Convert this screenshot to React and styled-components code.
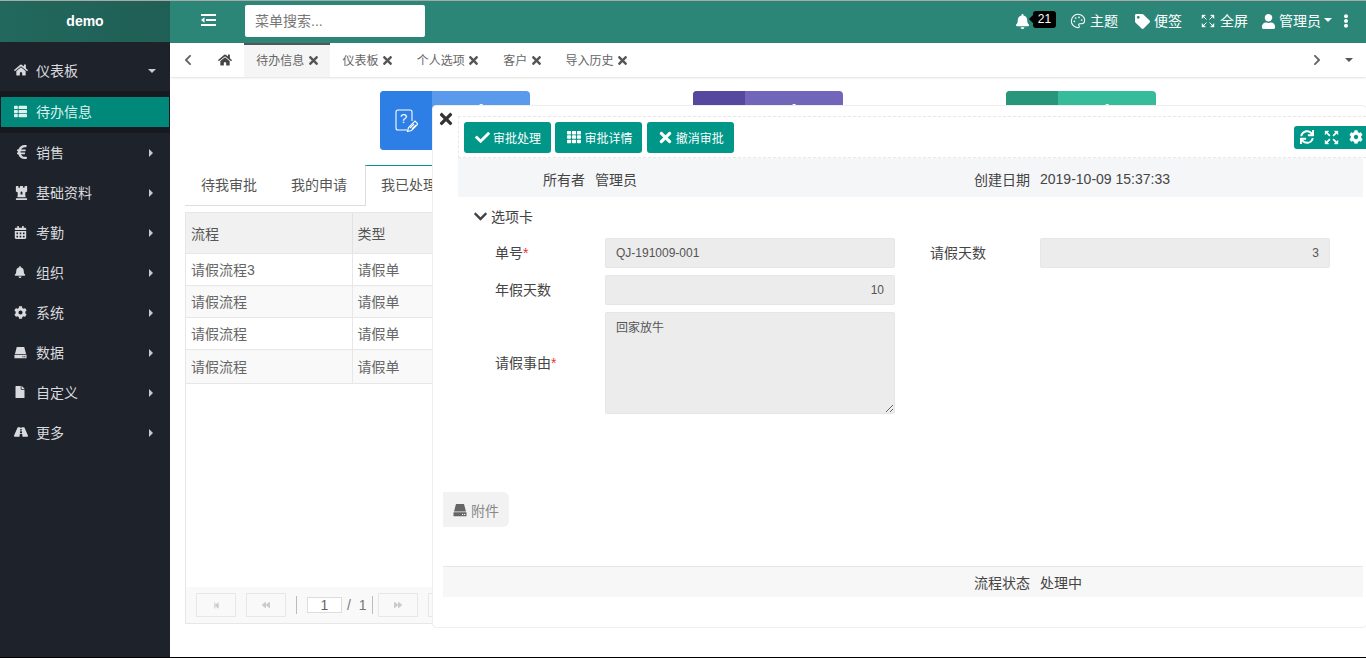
import React from 'react'
import styled, { createGlobalStyle } from 'styled-components'
import {
  FaHome, FaThList, FaEuroSign, FaChessRook, FaCalendarAlt, FaBell, FaCog, FaFile, FaRoad,
  FaTimes, FaCheck, FaTh, FaChevronDown, FaChevronLeft, FaChevronRight, FaSync,
  FaTag, FaUser, FaEllipsisV, FaStepBackward, FaBackward, FaForward,
} from 'react-icons/fa'
import { Palette } from 'lucide-react'

const GlobalStyle = createGlobalStyle`
  html, body { margin: 0; padding: 0; height: 100%; background: #fff; }
  * { box-sizing: border-box; }
  body {
    font-family: "Liberation Sans", "Noto Sans CJK SC", sans-serif;
    font-size: 14px;
    color: #555;
  }
`

const HddIcon = ({ size = 14 }) => (
  <svg width={size} height={size} viewBox="0 0 14 14" fill="currentColor">
    <path d="M3 1h8l2 7.500H1z" />
    <path fillRule="evenodd" d="M0.500 9.300h13v3.400a.6.6 0 0 1-.6.6H1.100a.6.6 0 0 1-.6-.6zM9 11v1h1.200v-1zM11 11v1h1.200v-1z" />
  </svg>
)

const FullIcon = ({ size = 14, weight = 1.4 }) => (
  <svg width={size} height={size} viewBox="0 0 14 14" fill="currentColor" stroke="currentColor" strokeWidth={weight}>
    <path d="M1 1h3.500L1 4.500z" strokeWidth="0.4" />
    <path d="M13 1H9.500L13 4.500z" strokeWidth="0.4" />
    <path d="M1 13h3.500L1 9.500z" strokeWidth="0.4" />
    <path d="M13 13H9.500L13 9.500z" strokeWidth="0.4" />
    <path d="M2.500 2.500l3 3M11.500 2.500l-3 3M2.500 11.500l3-3M11.500 11.500l-3-3" fill="none" />
  </svg>
)

const ToggleIcon = () => (
  <svg width="15" height="12" viewBox="0 0 15 12" fill="#fff">
    <rect x="0" y="0" width="15" height="2" />
    <rect x="5" y="5" width="10" height="2" />
    <rect x="0" y="10" width="15" height="2" />
    <path d="M0 6l3.500-2.800v5.600z" />
  </svg>
)

const QuestionIcon = () => (
  <svg width="24" height="24" viewBox="0 0 24 24" fill="none" stroke="#fff" strokeWidth="1.1">
    <path d="M13 21H4a2 2 0 0 1-2-2V3a2 2 0 0 1 2-2h12a2 2 0 0 1 2 2v9" />
    <text x="6" y="14" fontSize="13" fill="#fff" stroke="none" fontFamily="Liberation Sans">?</text>
    <path d="M13.500 22.500l1-4 6.500-6.500 3 3-6.500 6.500z" />
    <path d="M16 19l4-4M18 20l4-4" />
  </svg>
)

const menuItems = [
  { label: '销售', icon: <FaEuroSign size={16} /> },
  { label: '基础资料', icon: <FaChessRook size={15} /> },
  { label: '考勤', icon: <FaCalendarAlt size={13} /> },
  { label: '组织', icon: <FaBell size={12} /> },
  { label: '系统', icon: <FaCog size={13} /> },
  { label: '数据', icon: <HddIcon size={13} /> },
  { label: '自定义', icon: <FaFile size={12} /> },
  { label: '更多', icon: <FaRoad size={14} /> },
]

const pageTabs = [
  { label: '待办信息', active: true },
  { label: '仪表板' },
  { label: '个人选项' },
  { label: '客户' },
  { label: '导入历史' },
]

const rows = ['请假流程3', '请假流程', '请假流程', '请假流程']

const cards = [
  { dark: '#2d7fe6', light: '#5a9aec', icon: <QuestionIcon /> },
  { dark: '#57489f', light: '#7266ba' },
  { dark: '#27967a', light: '#37bc9b' },
]

export default function App() {
  return (
    <Page>
      <GlobalStyle />
      <Sidebar>
        <Brand>demo</Brand>
        <Menu>
          <MenuItem>
            <MenuIcon><FaHome size={14} /></MenuIcon>
            仪表板
            <CaretDown />
          </MenuItem>
          <ActiveBand>
            <ActiveItem>
              <MenuIcon><FaThList size={13} /></MenuIcon>
              待办信息
            </ActiveItem>
          </ActiveBand>
          {menuItems.map(item => (
            <MenuItem key={item.label}>
              <MenuIcon>{item.icon}</MenuIcon>
              {item.label}
              <CaretRight />
            </MenuItem>
          ))}
        </Menu>
      </Sidebar>

      <Main>
        <Topbar>
          <Toggle><ToggleIcon /></Toggle>
          <Search placeholder="菜单搜索..." />
          <TopActions>
            <BellWrap>
              <FaBell size={15} />
              <Badge>21</Badge>
            </BellWrap>
            <TopAction $width={65}><Palette size={16} strokeWidth={1.6} />主题</TopAction>
            <TopAction $width={66}><FaTag size={15} />便签</TopAction>
            <TopAction $width={60} $gap={5}><FullIcon size={14} weight={1} />全屏</TopAction>
            <UserBox><FaUser size={15} />管理员<UserCaret /></UserBox>
            <Dots><FaEllipsisV size={14} /></Dots>
          </TopActions>
        </Topbar>

        <TabBar>
          <TabArrow $width={36}><FaChevronLeft size={12} /></TabArrow>
          <HomeTab><FaHome size={14} /></HomeTab>
          {pageTabs.map(tab => (
            <PageTab key={tab.label} $active={tab.active}>
              {tab.label}
              <TabClose><FaTimes size={13} /></TabClose>
            </PageTab>
          ))}
          <TabRight>
            <TabArrow $width={32}><FaChevronRight size={12} /></TabArrow>
            <TabCaretBox><TabCaret /></TabCaretBox>
          </TabRight>
        </TabBar>

        <Content>
          <Cards>
            {cards.map((card, i) => (
              <Card key={i} $color={card.light}>
                <CardIcon $color={card.dark}>{card.icon}</CardIcon>
                <CardNumber>1</CardNumber>
              </Card>
            ))}
          </Cards>

          <Tabs>
            <TabItem>待我审批</TabItem>
            <TabItem>我的申请</TabItem>
            <TabItem $active>我已处理</TabItem>
          </Tabs>

          <TableBox>
            <Table>
              <thead>
                <tr>
                  <HeadCell $w={166}>流程</HeadCell>
                  <HeadCell>类型</HeadCell>
                </tr>
              </thead>
              <tbody>
                {rows.map((row, i) => (
                  <Row key={i} $odd={i % 2 === 1} $last={i === 3}>
                    <Cell>{row}</Cell>
                    <Cell>请假单</Cell>
                  </Row>
                ))}
              </tbody>
            </Table>
            <Pager>
              <PagerBtn><FaStepBackward size={7} /></PagerBtn>
              <PagerBtn><FaBackward size={8} /></PagerBtn>
              <PagerSep />
              <PagerInput defaultValue="1" />
              <PagerText>/ 1</PagerText>
              <PagerSep $tight />
              <PagerBtn><FaForward size={8} /></PagerBtn>
              <PagerBtn />
            </Pager>
          </TableBox>

          <Modal>
            <CloseBtn><FaTimes size={18} /></CloseBtn>
            <Toolbar>
              <ActionBtn><ActionIcon><FaCheck size={15} /></ActionIcon>审批处理</ActionBtn>
              <ActionBtn><ActionIcon><FaTh size={14} /></ActionIcon>审批详情</ActionBtn>
              <ActionBtn><ActionIcon><FaTimes size={17} /></ActionIcon>撤消审批</ActionBtn>
              <ToolGroup>
                <FaSync size={14} />
                <FullIcon size={15} weight={1.6} />
                <FaCog size={14} />
              </ToolGroup>
            </Toolbar>
            <InfoBand>
              <InfoLabel>所有者</InfoLabel>
              <span>管理员</span>
              <InfoLabel>创建日期</InfoLabel>
              <span>2019-10-09 15:37:33</span>
            </InfoBand>
            <SectionTitle><FaChevronDown size={15} />选项卡</SectionTitle>
            <Form>
              <FieldLabel>单号<Star>*</Star></FieldLabel>
              <Field readOnly defaultValue="QJ-191009-001" />
              <FieldLabel $second>请假天数</FieldLabel>
              <Field $right readOnly defaultValue="3" />
              <FieldLabel>年假天数</FieldLabel>
              <Field $right readOnly defaultValue="10" />
              <FormGap />
              <FieldLabel>请假事由<Star>*</Star></FieldLabel>
              <Memo readOnly defaultValue="回家放牛" />
            </Form>
            <AttachTab><HddIcon size={14} />附件</AttachTab>
            <StatusBand>
              <span />
              <span />
              <InfoLabel>流程状态</InfoLabel>
              <span>处理中</span>
            </StatusBand>
          </Modal>
        </Content>
      </Main>
    </Page>
  )
}

const Page = styled.div`
  display: flex;
  width: 1366px;
  height: 658px;
  overflow: hidden;
  border-top: 1px solid #a9a9a9;
  border-bottom: 1px solid #000;
`

const Sidebar = styled.aside`
  width: 170px;
  flex: none;
  background: #1e222b;
  color: #d8dadd;
`

const Brand = styled.div`
  height: 41px;
  padding-bottom: 2px;
  display: flex;
  align-items: center;
  justify-content: center;
  background: linear-gradient(to right, #22685c, #205f55);
  color: #fff;
  font-weight: bold;
  font-size: 14px;
`

const Menu = styled.nav`
  padding-top: 9px;
`

const MenuItem = styled.div`
  height: 40px;
  padding: 0 0 2px 14px;
  display: flex;
  align-items: center;
  position: relative;
`

const MenuIcon = styled.span`
  width: 22px;
  display: flex;
  align-items: center;
  flex: none;
`

const CaretDown = styled.i`
  position: absolute;
  right: 14px;
  top: 18px;
  border: 4px solid transparent;
  border-top-color: #c8cacd;
  border-bottom: 0;
`

const CaretRight = styled.i`
  position: absolute;
  right: 17px;
  top: 16px;
  border: 4px solid transparent;
  border-left-color: #c8cacd;
  border-right: 0;
`

const ActiveBand = styled.div`
  height: 42px;
  padding: 6px 1px;
  background: #16191f;
`

const ActiveItem = styled.div`
  height: 30px;
  padding: 0 0 2px 13px;
  display: flex;
  align-items: center;
  background: #00897b;
  color: #dff1ee;
`

const Main = styled.div`
  flex: 1;
  min-width: 0;
  display: flex;
  flex-direction: column;
`

const Topbar = styled.header`
  height: 42px;
  padding-bottom: 2px;
  flex: none;
  display: flex;
  align-items: center;
  background: #2c8678;
  color: #fff;
`

const Toggle = styled.div`
  width: 75px;
  padding: 0 0 2px 31px;
  display: flex;
  align-items: center;
  flex: none;
`

const Search = styled.input`
  width: 180px;
  height: 32px;
  border: 0;
  border-radius: 2px;
  padding: 0 10px;
  font: inherit;
  background: #fff;
  outline: none;
  &::placeholder { color: #777; opacity: 1; }
`

const TopActions = styled.div`
  margin-left: auto;
  display: flex;
  align-items: center;
  height: 100%;
`

const BellWrap = styled.div`
  width: 55px;
  display: flex;
  align-items: center;
  gap: 3px;
`

const Badge = styled.span`
  position: relative;
  width: 23px;
  height: 17px;
  margin-bottom: 4px;
  background: #000;
  border-radius: 3px;
  color: #fff;
  font-size: 12px;
  line-height: 17px;
  text-align: center;
  &::before {
    content: '';
    position: absolute;
    left: -4px;
    top: 4px;
    border: 4px solid transparent;
    border-right-color: #000;
    border-left: 0;
  }
`

const TopAction = styled.div`
  width: ${p => p.$width}px;
  padding-bottom: 2px;
  display: flex;
  align-items: center;
  gap: ${p => p.$gap || 4}px;
  svg { margin-top: 2px; }
`

const UserBox = styled.div`
  width: 79px;
  padding-bottom: 2px;
  display: flex;
  align-items: center;
  gap: 3px;
  svg { margin-top: 2px; }
`

const UserCaret = styled.i`
  border: 4px solid transparent;
  border-top-color: #fff;
  border-bottom: 0;
`

const Dots = styled.div`
  width: 26px;
  display: flex;
  align-items: center;
  svg { margin-left: -1px; }
`

const TabBar = styled.div`
  height: 34px;
  flex: none;
  display: flex;
  align-items: stretch;
  background: #fff;
  box-shadow: 0 1px 2px rgba(0, 0, 0, 0.12);
  font-size: 12px;
  color: #666;
  position: relative;
  z-index: 1;
`

const TabArrow = styled.div`
  width: ${p => p.$width}px;
  display: flex;
  align-items: center;
  justify-content: center;
  color: #666;
`

const HomeTab = styled.div`
  width: 38px;
  padding-right: 1px;
  display: flex;
  align-items: center;
  justify-content: center;
  color: #444;
`

const PageTab = styled.div`
  display: flex;
  align-items: center;
  gap: 4px;
  padding: 0 12.17px 4px;
  background: ${p => (p.$active ? '#f5f5f5' : '#fff')};
  border-top: 2px solid ${p => (p.$active ? '#555' : 'transparent')};
`

const TabClose = styled.span`
  width: 10px;
  display: flex;
  justify-content: center;
  color: #555;
  margin-top: 2px;
  svg { flex: none; }
`

const TabRight = styled.div`
  margin-left: auto;
  display: flex;
`

const TabCaretBox = styled.div`
  width: 33px;
  padding-right: 2px;
  display: flex;
  align-items: center;
  justify-content: center;
`

const TabCaret = styled.i`
  border: 4px solid transparent;
  border-top-color: #555;
  border-bottom: 0;
`

const Content = styled.main`
  flex: 1;
  min-height: 0;
  position: relative;
  overflow: hidden;
  padding: 14px 15px 0;
`

const Cards = styled.div`
  display: flex;
  justify-content: center;
  gap: 163px;
  height: 59px;
`

const Card = styled.div`
  width: 150px;
  height: 59px;
  display: flex;
  background: ${p => p.$color};
  border-radius: 4px;
  overflow: hidden;
  color: #fff;
`

const CardIcon = styled.div`
  width: 52px;
  display: flex;
  align-items: center;
  justify-content: center;
  background: ${p => p.$color};
`

const CardNumber = styled.div`
  flex: 1;
  text-align: center;
  font-size: 24px;
  line-height: 43px;
  color: #fff;
`

const Tabs = styled.div`
  margin-top: 15px;
  display: flex;
  gap: 2px;
  height: 41px;
  border-bottom: 1px solid #ddd;
`

const TabItem = styled.div`
  padding: 0 ${p => (p.$active ? '15px' : '16px')};
  line-height: 40px;
  height: ${p => (p.$active ? '41px' : '40px')};
  background: #fff;
  color: #555;
  width: ${p => (p.$active ? '120px' : 'auto')};
  ${p => p.$active && 'border: 1px solid #ddd; border-top: 1px solid #009688; border-bottom: 0; line-height: 39px;'}
`

const TableBox = styled.div`
  margin-top: 6px;
  height: 412px;
  border: 1px solid #e7e7e7;
  display: flex;
  flex-direction: column;
  justify-content: space-between;
`

const Table = styled.table`
  width: 100%;
  border-collapse: collapse;
  table-layout: fixed;
`

const HeadCell = styled.th`
  height: 40px;
  width: ${p => (p.$w ? `${p.$w}px` : 'auto')};
  background: #f1f1f1;
  border-right: 1px solid #e2e2e2;
  border-bottom: 1px solid #e7e7e7;
  padding: 0 5px;
  font-weight: normal;
  text-align: left;
  color: #555;
`

const Row = styled.tr`
  height: ${p => (p.$last ? '34px' : '32px')};
  background: ${p => (p.$odd ? '#f9f9f9' : '#fff')};
`

const Cell = styled.td`
  border-right: 1px solid #e7e7e7;
  border-bottom: 1px solid #e7e7e7;
  padding: 0 5px;
  color: #666;
`

const Pager = styled.div`
  height: 36px;
  background: #f9f9f9;
  display: flex;
  align-items: center;
  gap: 10px;
  padding-left: 10px;
`

const PagerBtn = styled.div`
  width: 40px;
  height: 24px;
  border: 1px solid #e7e7e7;
  display: flex;
  align-items: center;
  justify-content: center;
  color: #ccc;
`

const PagerSep = styled.i`
  width: 1px;
  height: 18px;
  background: #bbb;
  margin-right: ${p => (p.$tight ? '-5px' : '0')};
`

const PagerInput = styled.input`
  width: 35px;
  height: 16px;
  border: 1px solid #ddd;
  padding: 0;
  text-align: center;
  font: inherit;
  color: #666;
  background: #fff;
`

const PagerText = styled.span`
  width: 25px;
  margin: 0 -10px 0 -5px;
  word-spacing: 4px;
  color: #777;
`

const Modal = styled.section`
  position: absolute;
  left: 262px;
  top: 28px;
  width: 935px;
  height: 523px;
  background: #fff;
  border: 1px solid #eee;
  border-radius: 4px;
  z-index: 2;
`

const CloseBtn = styled.div`
  position: absolute;
  left: 4px;
  top: 4px;
  color: #333;
  display: flex;
`

const Toolbar = styled.div`
  margin: 10px 0 0 25px;
  height: 42px;
  display: flex;
  align-items: center;
  gap: 4.4px;
  padding-left: 5px;
  border: 1px dashed #e8e8e8;
  border-right: 0;
`

const ActionBtn = styled.button`
  height: 31px;
  padding: 0 10px 0 11px;
  display: flex;
  align-items: center;
  gap: 3px;
  border: 0;
  border-radius: 3px;
  background: #009688;
  color: #fff;
  font: inherit;
  font-size: 12px;
`

const ActionIcon = styled.span`
  width: 15px;
  display: flex;
  justify-content: center;
  svg { flex: none; }
`

const ToolGroup = styled.div`
  margin-left: auto;
  width: 72px;
  height: 23px;
  display: flex;
  align-items: center;
  justify-content: space-between;
  padding: 0 3px 0 6px;
  background: #009688;
  border-radius: 3px 0 0 3px;
  color: #fff;
`

const InfoBand = styled.div`
  margin: 0 3px 0 25px;
  height: 39px;
  padding-top: 3px;
  display: grid;
  grid-template-columns: 127px 325px 100px 1fr;
  column-gap: 10px;
  align-items: center;
  background: #f5f6f8;
  color: #444;
`

const InfoLabel = styled.span`
  text-align: right;
`

const SectionTitle = styled.div`
  margin: 10px 0 0 40px;
  height: 20px;
  padding-bottom: 2px;
  display: flex;
  align-items: center;
  gap: 3px;
  color: #444;
`

const Form = styled.div`
  margin: 11px 0 0 62px;
  display: grid;
  grid-template-columns: 110px 290px 145px 290px;
  row-gap: 7px;
  align-items: center;
  color: #444;
`

const FieldLabel = styled.label`
  padding-bottom: 2px;
  ${p => p.$second && 'padding-left: 35px;'}
`

const Star = styled.span`
  color: #e33;
`

const Field = styled.input`
  height: 30px;
  width: 290px;
  padding: 0 10px;
  border: 1px solid #e6e6e6;
  border-radius: 2px;
  background: #ececec;
  font: inherit;
  font-size: 12px;
  color: #555;
  text-align: ${p => (p.$right ? 'right' : 'left')};
  outline: none;
`

const FormGap = styled.span`
  grid-column: span 2;
`

const Memo = styled.textarea`
  height: 102px;
  width: 290px;
  padding: 5px 10px;
  border: 1px solid #e6e6e6;
  border-radius: 2px;
  background: #ececec;
  font: inherit;
  font-size: 12px;
  color: #555;
  resize: vertical;
  outline: none;
  display: block;
`

const AttachTab = styled.div`
  margin: 78px 0 0 10px;
  width: 66px;
  height: 35px;
  display: flex;
  align-items: center;
  gap: 4px;
  padding-left: 10px;
  background: #f2f2f2;
  border-radius: 0 6px 6px 0;
  color: #888;
  font-size: 14px;
  svg { color: #666; }
`

const StatusBand = styled.div`
  margin: 39px 3px 0 10px;
  height: 31px;
  display: grid;
  grid-template-columns: 142px 325px 100px 1fr;
  column-gap: 10px;
  align-items: center;
  background: #f7f7f7;
  border-top: 1px solid #e7e7e7;
  color: #444;
`
